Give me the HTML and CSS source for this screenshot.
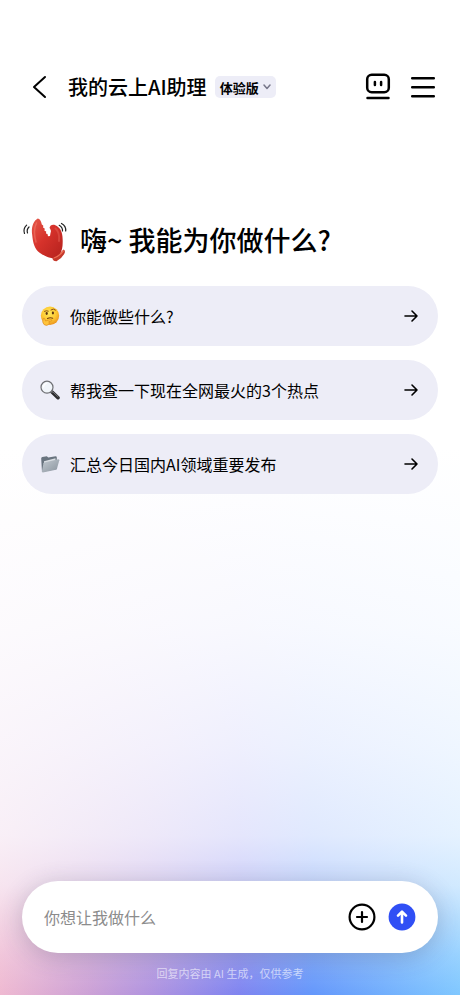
FILE: index.html
```html
<!DOCTYPE html>
<html lang="zh-CN">
<head>
  <meta charset="UTF-8" />
  <meta name="viewport" content="width=device-width, initial-scale=1.0" />
  <title>我的云上AI助理</title>
  <link rel="stylesheet" href="styles.css">
</head>
<body>
  <header class="header">
    <button class="icon-btn back" aria-label="返回">
      <svg width="16" height="24" viewBox="0 0 16 24" fill="none" stroke="#000" stroke-width="2" stroke-linecap="round" stroke-linejoin="round">
        <path d="M13 2L2 12l11 10" />
      </svg>
    </button>
    <h1 class="title">我的云上AI助理</h1>
    <button class="version">
      体验版
      <svg width="8" height="6" viewBox="0 0 8 6" fill="none" stroke="#77778a" stroke-width="1.5" stroke-linecap="round" stroke-linejoin="round">
        <path d="M1 1l3 3.5L7 1" />
      </svg>
    </button>
    <div class="actions">
      <button class="icon-btn" aria-label="助理">
        <svg width="26" height="28" viewBox="0 0 26 28" fill="none" stroke="#000" stroke-width="2.5" stroke-linecap="round">
          <rect x="2.2" y="1.7" width="21.6" height="17.6" rx="4.5" />
          <path d="M9.9 9v3M16.1 9v3" />
          <path d="M2.5 25h21" />
        </svg>
      </button>
      <button class="icon-btn" aria-label="菜单">
        <svg width="26" height="28" viewBox="0 0 26 28" fill="none" stroke="#000" stroke-width="2.5" stroke-linecap="round">
          <path d="M2.2 5.2h21.6M2.2 14.2h21.6M2.2 23.2h21.6" />
        </svg>
      </button>
    </div>
  </header>

  <main class="content">
    <h2 class="greeting">
      <svg class="claw" width="46" height="46" viewBox="0 0 46 46">
        <defs>
          <linearGradient id="clawRed" x1="0" y1="0" x2="1" y2="1">
            <stop offset="0" stop-color="#e65a4b" />
            <stop offset="0.45" stop-color="#d6322b" />
            <stop offset="1" stop-color="#b3211d" />
          </linearGradient>
        </defs>
        <path d="M31 38.500Q38 37 41.500 32.500Q43.500 33 42.700 36Q40 41.500 34.500 44.300Q31.500 44.500 30.500 42Z" fill="#c4382b" />
        <path d="M15.700 1.500C11 4 9 11 10.200 18C11 26 12.500 32 18 36C23 39.500 28 41 32 41.500C37 39.500 40 35 40.500 29C41 22 41 13 35.500 9.500C32 6.500 28 7.500 27.500 11C28.500 12 29.500 14 28.500 16L28 19L26 19.300L25.500 17L24 16.500L24.200 14.500L22.500 13.800L22.700 11.500L21.200 10.800L21.200 8.500L19.800 7.500C19.500 5 17.800 1.500 15.700 1.500Z" fill="url(#clawRed)" />
        <path d="M14.500 6C12 11 12 18 14 25" fill="none" stroke="#ff9b87" stroke-width="1.500" stroke-linecap="round" opacity="0.35" />
        <path d="M33.500 11.500C36.500 14 37.500 19 37 24" fill="none" stroke="#f98170" stroke-width="2" stroke-linecap="round" opacity="0.3" />
        <path d="M32 41Q37.500 39 41.200 34" fill="none" stroke="#ec6d54" stroke-width="1.300" stroke-linecap="round" />
        <g fill="none" stroke="#222" stroke-width="1.200" stroke-linecap="round">
          <path d="M4.600 8.200Q.8 12 2.500 16.500M7 10Q4.400 12.500 5.500 16" />
          <path d="M39.500 6.500Q44.200 9 43.700 14M37.200 8.300Q40.800 10.500 40.500 14" />
        </g>
      </svg>
      <span>嗨~ 我能为你做什么?</span>
    </h2>

    <div class="suggestions">
      <button class="suggestion">
        <svg class="emoji" width="20" height="20" viewBox="0 0 20 20">
          <defs>
            <radialGradient id="faceYellow" cx="0.45" cy="0.35" r="0.65">
              <stop offset="0" stop-color="#ffe85a" />
              <stop offset="0.6" stop-color="#fdc832" />
              <stop offset="1" stop-color="#eb9420" />
            </radialGradient>
          </defs>
          <circle cx="10" cy="9.800" r="9.200" fill="url(#faceYellow)" />
          <ellipse cx="6.700" cy="7.500" rx="1.100" ry="1.400" fill="#5b3413" />
          <ellipse cx="12.900" cy="7" rx="1.100" ry="1.400" fill="#5b3413" />
          <path d="M4.500 5.300Q6.500 4.200 8.300 5.100M11 3.900Q13.500 2 15.500 4" fill="none" stroke="#8a5117" stroke-width="1" stroke-linecap="round" />
          <path d="M7.500 12.600Q10 11.200 12.700 12.200" fill="none" stroke="#77410f" stroke-width="1.100" stroke-linecap="round" />
          <path d="M3.200 12.500Q4.300 11.500 4.800 13L5.500 15L10.700 13.500Q12.300 13.500 11.800 14.700L8.700 15.800Q10 16.500 8.700 18.500Q6.500 20.300 4 18.500Q1.800 16.500 3.200 12.500Z" fill="#ffc43b" stroke="#d8841c" stroke-width="0.600" />
        </svg>
        <span class="label">你能做些什么?</span>
        <svg class="arrow" width="16" height="14" viewBox="0 0 16 14">
          <path d="M2 7h12M9 2l5 5-5 5" />
        </svg>
      </button>
      <button class="suggestion">
        <svg class="emoji" width="20" height="20" viewBox="0 0 20 20">
          <path d="M12 12L18 17.700" stroke="#2c2c2e" stroke-width="3.600" stroke-linecap="round" />
          <path d="M13 12L18 16.700" stroke="#85858a" stroke-width="0.800" stroke-linecap="round" />
          <path d="M10.500 10.500l2 2" stroke="#77777b" stroke-width="1.600" />
          <circle cx="7" cy="7.200" r="6" fill="#f1f5fa" stroke="#6f7074" stroke-width="1.200" />
          <path d="M3.500 7Q3.800 4 6.500 3.500" fill="none" stroke="#fff" stroke-width="1.200" stroke-linecap="round" />
        </svg>
        <span class="label">帮我查一下现在全网最火的3个热点</span>
        <svg class="arrow" width="16" height="14" viewBox="0 0 16 14">
          <path d="M2 7h12M9 2l5 5-5 5" />
        </svg>
      </button>
      <button class="suggestion">
        <svg class="emoji" width="20" height="20" viewBox="0 0 20 20">
          <defs>
            <linearGradient id="folderFront" x1="0" y1="0" x2="1" y2="1">
              <stop offset="0" stop-color="#c3cad1" />
              <stop offset="1" stop-color="#8a949e" />
            </linearGradient>
          </defs>
          <path d="M1.200 4.500Q1.200 3.300 2.300 3.100L6.800 2.300L8.300 3.600L15.500 2.200Q16.800 2.200 16.800 3.500V15L2 18Z" fill="#69747f" />
          <path d="M4 7.300L15.500 4.200V10H4Z" fill="#d9dee3" />
          <path d="M4.300 8.400L18.300 5.200Q19.500 5.200 19.300 6.300L16.900 14.900Q16.700 15.600 16 15.800L2.800 18.400Q1.700 18.400 1.900 17.300L3.500 9.200Q3.700 8.600 4.300 8.400Z" fill="url(#folderFront)" />
        </svg>
        <span class="label">汇总今日国内AI领域重要发布</span>
        <svg class="arrow" width="16" height="14" viewBox="0 0 16 14">
          <path d="M2 7h12M9 2l5 5-5 5" />
        </svg>
      </button>
    </div>
  </main>

  <footer class="footer">
    <form class="composer" onsubmit="return false">
      <input class="prompt" type="text" placeholder="你想让我做什么" aria-label="你想让我做什么" />
      <button class="icon-btn" type="button" aria-label="添加">
        <svg width="28" height="28" viewBox="0 0 28 28" fill="none" stroke="#000" stroke-width="2.200" stroke-linecap="round">
          <circle cx="14" cy="14" r="12.400" />
          <path d="M9 14h10M14 9v10" />
        </svg>
      </button>
      <button class="icon-btn" type="submit" aria-label="发送">
        <svg width="28" height="28" viewBox="0 0 28 28" fill="none" stroke="#fff" stroke-width="2.600" stroke-linecap="round" stroke-linejoin="round">
          <circle cx="14" cy="14" r="13.400" fill="#304ff5" stroke="none" />
          <path d="M14 19.500V9.500M10 12.700l4-4 4 4" />
        </svg>
      </button>
    </form>
    <p class="notice">回复内容由 AI 生成，仅供参考</p>
  </footer>
</body>
</html>
```

FILE: styles.css
```css
* {
  margin: 0;
  padding: 0;
  box-sizing: border-box;
}

body {
  min-height: 100vh;
  display: flex;
  flex-direction: column;
  color: #000;
  font-family: "Noto Sans CJK SC", sans-serif;
  background:
    linear-gradient(to top,
      rgba(251, 251, 255, 0) 0%,
      rgba(251, 251, 255, 0.2) 4%,
      rgba(251, 251, 255, 0.66) 11%,
      rgba(251, 251, 255, 0.82) 16%,
      rgba(251, 251, 255, 0.9) 25%,
      rgba(253, 253, 255, 0.96) 37%,
      #fff 55%),
    linear-gradient(to right, #efb9d1 0%, #cba0d6 20%, #b093df 33%, #7f84f0 52%, #6497fb 68%, #80c8ff 100%);
}

button {
  border: none;
  background: none;
  color: inherit;
  font-family: inherit;
  cursor: pointer;
}

svg {
  display: block;
  flex-shrink: 0;
}

.icon-btn {
  display: flex;
  align-items: center;
  justify-content: center;
}

.header {
  display: flex;
  align-items: center;
  padding: 70px 24px 0 32px;
  height: 104px;
}

.title {
  margin-left: 20px;
  font-size: 20px;
  font-weight: 500;
  line-height: 32px;
  white-space: nowrap;
}

.version {
  display: flex;
  align-items: center;
  gap: 4px;
  height: 22px;
  margin-left: 8px;
  padding: 0 5px;
  border-radius: 5px;
  background: #ededf7;
  font-size: 13px;
  font-weight: 700;
  white-space: nowrap;
}

.actions {
  display: flex;
  gap: 19px;
  margin-left: auto;
}

.content {
  flex: 1;
  padding: 112px 22px 40px;
}

.greeting {
  display: flex;
  align-items: center;
  gap: 12px;
  font-size: 27px;
  font-weight: 500;
  line-height: 48px;
}

.suggestions {
  display: flex;
  flex-direction: column;
  gap: 14px;
  margin-top: 22px;
}

.suggestion {
  display: flex;
  align-items: center;
  width: 100%;
  min-height: 60px;
  padding: 0 19px 0 18px;
  border-radius: 30px;
  background: #ededf7;
  font-size: 16px;
  line-height: 24px;
  text-align: left;
}

.label {
  flex: 1;
  margin: 0 10px;
}

.arrow {
  fill: none;
  stroke: #000;
  stroke-width: 1.6px;
  stroke-linecap: round;
  stroke-linejoin: round;
}

.footer {
  padding: 0 22px 12px;
}

.composer {
  display: flex;
  align-items: center;
  gap: 12px;
  height: 72px;
  padding: 0 22px;
  border-radius: 36px;
  background: #fff;
  box-shadow: 0 4px 24px rgba(60, 60, 80, 0.24);
}

.prompt {
  flex: 1;
  min-width: 0;
  border: none;
  outline: none;
  background: none;
  font-family: inherit;
  font-size: 16px;
}

.prompt::placeholder {
  color: #8c8c8c;
}

.notice {
  margin-top: 10px;
  color: rgba(255, 255, 255, 0.6);
  font-size: 11px;
  line-height: 20px;
  text-align: center;
}
```
